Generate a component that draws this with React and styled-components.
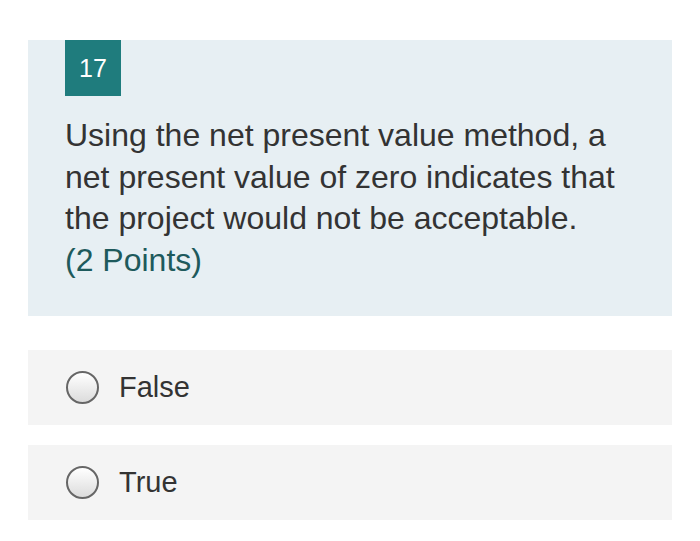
import React from "react";
import styled, { createGlobalStyle } from "styled-components";

const Global = createGlobalStyle`
  body {
    margin: 0;
    background: #ffffff;
    font-family: "Liberation Sans", Arial, sans-serif;
  }
`;

export default function App() {
  return (
    <Page>
      <Global />
      <Question>
        <Badge>17</Badge>
        <Title>
          Using the net present value method, a net present value of zero
          indicates that the project would not be acceptable.
          <Points>(2 Points)</Points>
        </Title>
      </Question>
      <Options>
        <Option>
          <Radio />
          <Label>False</Label>
        </Option>
        <Option>
          <Radio />
          <Label>True</Label>
        </Option>
      </Options>
    </Page>
  );
}

const Page = styled.div`
  padding: 40px 28px 0;
`;

const Question = styled.div`
  background: #e7eff3;
  padding: 0 37px;
  height: 276px;
  box-sizing: border-box;
`;

const Badge = styled.div`
  width: 56px;
  height: 56px;
  background: #1f7c7d;
  color: #ffffff;
  font-size: 25px;
  display: flex;
  align-items: center;
  justify-content: center;
`;

const Title = styled.div`
  margin-top: 19px;
  font-size: 32px;
  line-height: 41.5px;
  color: #333333;
  width: 570px;
`;

const Points = styled.div`
  color: #1e5a5c;
`;

const Options = styled.div`
  margin-top: 34px;
  display: flex;
  flex-direction: column;
  gap: 20px;
`;

const Option = styled.div`
  background: #f4f4f4;
  height: 75px;
  display: flex;
  align-items: center;
  padding-left: 38px;
  gap: 20px;
`;

const Radio = styled.span`
  width: 29px;
  height: 29px;
  border-radius: 50%;
  border: 2px solid #666666;
  background: linear-gradient(#ffffff, #dcdcdc);
`;

const Label = styled.span`
  font-size: 29px;
  color: #333333;
`;
